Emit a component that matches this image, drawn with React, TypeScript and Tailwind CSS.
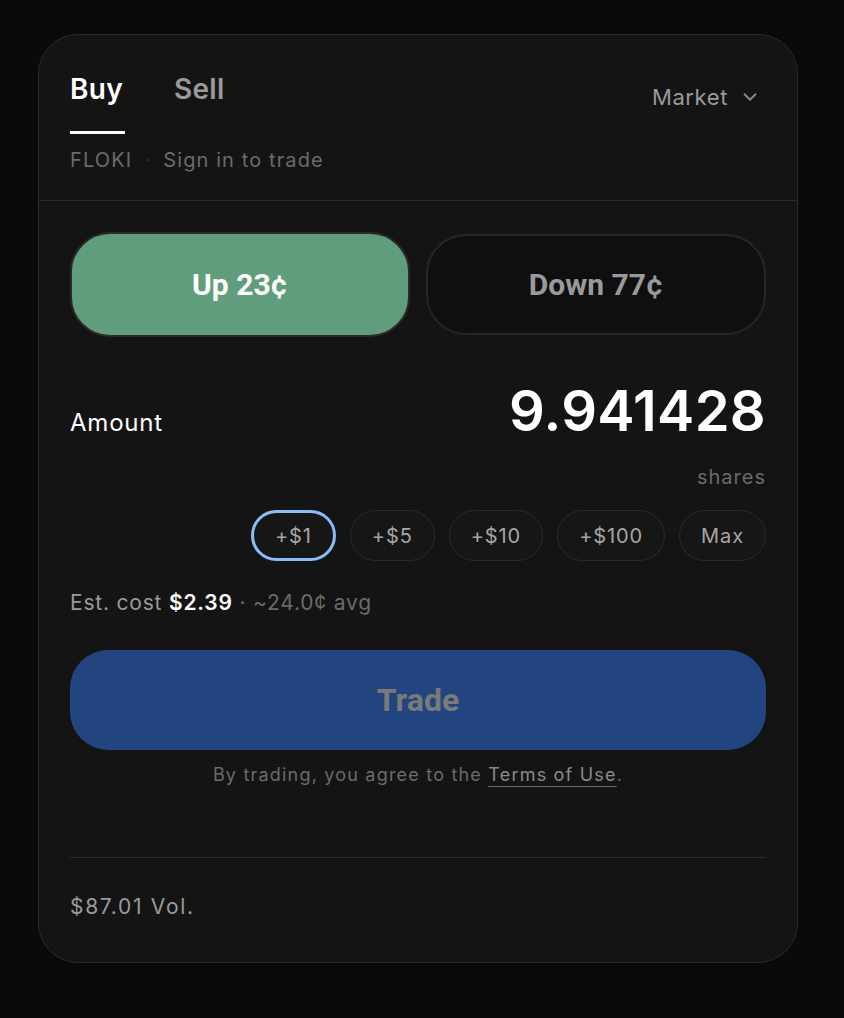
import React, { useState } from 'react';
import { ChevronDown } from 'lucide-react';

const amounts = ['+$1', '+$5', '+$10', '+$100', 'Max'];

export default function App() {
  const [side, setSide] = useState<'buy' | 'sell'>('buy');
  const [outcome, setOutcome] = useState<'up' | 'down'>('up');
  const [picked, setPicked] = useState('+$1');

  return (
    <div className="min-h-screen bg-[#0a0a0a] pl-[38px] pt-[34px] font-['Inter',sans-serif]">
      <div className="w-[760px] rounded-[40px] border border-[#2b2b2b] bg-[#141414]">
        {/* header */}
        <div className="px-[31px] pt-[37px] pb-[28px]">
          <div className="flex items-start justify-between">
            <div className="flex gap-[49px]">
              <button onClick={() => setSide('buy')} className="flex flex-col items-start">
                <span className={`text-[28px] leading-[34px] font-semibold tracking-[0.3px] ${side === 'buy' ? 'text-white' : 'text-[#9a9a9a]'}`}>Buy</span>
                <span className={`mt-[25px] h-[3px] w-[55px] ${side === 'buy' ? 'bg-white' : 'bg-transparent'}`} />
              </button>
              <button onClick={() => setSide('sell')} className="flex flex-col items-start">
                <span className={`text-[28px] leading-[34px] font-semibold tracking-[0.3px] ${side === 'sell' ? 'text-white' : 'text-[#9a9a9a]'}`}>Sell</span>
                <span className={`mt-[25px] h-[3px] w-[50px] ${side === 'sell' ? 'bg-white' : 'bg-transparent'}`} />
              </button>
            </div>
            <button className="mt-[11px] mr-[5px] flex items-center gap-[11px] text-[22px] leading-[28px] tracking-[0.6px] text-[#9a9a9a]">
              Market
              <ChevronDown size={22} strokeWidth={2} className="text-[#8a8a8a]" />
            </button>
          </div>
          <div className="mt-[14px] flex items-center text-[20px] leading-[24px] tracking-[1.1px] text-[#6b6b6b]">
            <span>FLOKI</span>
            <span className="mx-[13px] text-[14px] text-[#444]">·</span>
            <span>Sign in to trade</span>
          </div>
        </div>

        <div className="border-t border-[#2b2b2b] px-[31px] pt-[31px] pb-[43px]">
          {/* outcomes */}
          <div className="grid grid-cols-2 gap-4 font-['Roboto',sans-serif]">
            <button
              onClick={() => setOutcome('up')}
              className={`h-[105px] rounded-[40px] border-2 text-[30px] font-bold ${outcome === 'up' ? 'border-[#2a2a2a] bg-[#5f9d7d] text-white' : 'border-[#2a2a2a] bg-[#0f0f0f] text-[#9a9a9a]'}`}
            >
              Up 23¢
            </button>
            <button
              onClick={() => setOutcome('down')}
              className={`h-[101px] mt-[2px] rounded-[40px] border-2 text-[30px] font-bold ${outcome === 'down' ? 'border-[#2a2a2a] bg-[#5f9d7d] text-white' : 'border-[#262626] bg-[#0f0f0f] text-[#9a9a9a]'}`}
            >
              Down 77¢
            </button>
          </div>

          {/* amount */}
          <div className="mt-[46px] flex items-baseline justify-between">
            <span className="text-[24px] tracking-[0.8px] text-white">Amount</span>
            <span className="text-[56px] leading-none font-semibold tracking-[0.3px] text-white">9.941428</span>
          </div>
          <div className="mt-[24px] text-right text-[20px] leading-[24px] tracking-[1px] text-[#6b6b6b]">shares</div>

          <div className="mt-[21px] flex justify-end gap-[14px]">
            {amounts.map((a) => (
              <button
                key={a}
                onClick={() => setPicked(a)}
                className={`h-[51px] rounded-full px-[21px] text-[20px] tracking-[0.9px] text-[#a6a6a6] bg-[#161616] ${picked === a ? 'border-[3px] border-[#8cbcf5]' : 'border-[1.5px] border-[#2b2b2b]'}`}
              >
                {a}
              </button>
            ))}
          </div>

          <div className="mt-[30px] text-[21px] leading-[24px] tracking-[0.8px] text-[#9a9a9a]">
            Est. cost <span className="font-semibold text-white">$2.39</span>
            <span className="text-[#6b6b6b]"> · ~24.0¢ avg</span>
          </div>

          <button className="mt-[35px] h-[100px] w-full rounded-[38px] bg-[#22457f] font-['Roboto',sans-serif] text-[32px] font-bold text-[#7a7a7a]">
            Trade
          </button>

          <p className="mt-[14px] text-center text-[18px] leading-[22px] tracking-[1.2px] text-[#6b6b6b]">
            By trading, you agree to the{' '}
            <span className="text-[#8a8a8a] underline decoration-[#6b6b6b] underline-offset-[5px]">Terms of Use</span>.
          </p>

          <div className="mt-[71px] border-t border-[#2b2b2b]" />

          <div className="mt-[37px] text-[21px] leading-[24px] tracking-[1.7px] text-[#9a9a9a]">$87.01 Vol.</div>
        </div>
      </div>
    </div>
  );
}
